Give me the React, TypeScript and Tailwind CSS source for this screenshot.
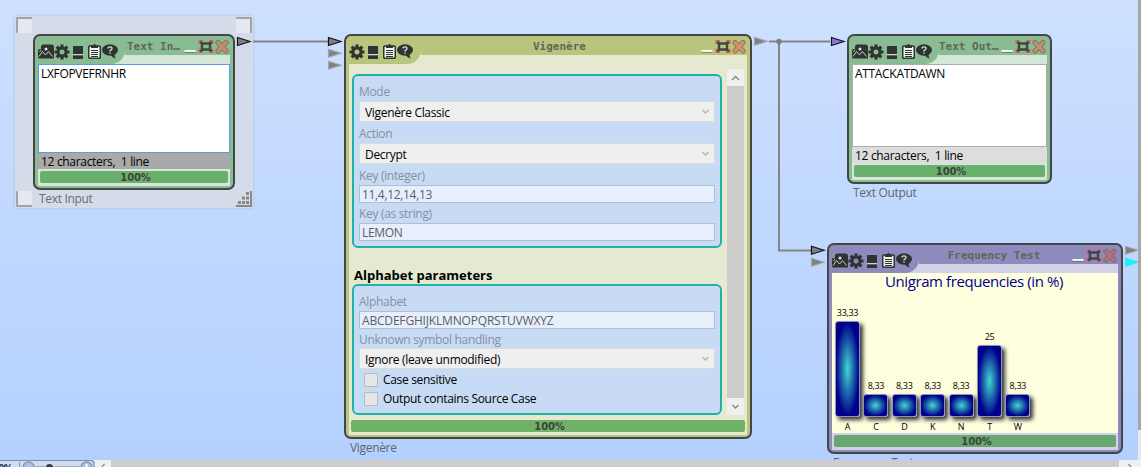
import type { ReactNode } from "react";

const PictureIcon = () => (
  <svg width="16" height="15" viewBox="0 0 16 15">
    <path d="M0 5.500 3 5V3Q3 .5 5 .5H13.500Q16 .5 16 3V14.500H1.500Q0 14.500 0 13Z" fill="#303331" />
    <path d="M1 12.500 4.500 7.500 7.500 11 10.500 7.500 14.500 12.500M1.500 8 3 6" fill="none" stroke="#b9d2bf" strokeWidth="1" />
    <circle cx="8" cy="5" r="1.500" fill="#dce8df" />
  </svg>
);

const GearIcon = () => (
  <svg width="16" height="16" viewBox="0 0 16 16">
    <g stroke="#303331" strokeWidth="3.2">
      <path d="M8 .5V4M8 12v3.500M.5 8H4M12 8h3.500M2.700 2.700 5 5M11 11l2.300 2.300M2.700 13.300 5 11M11 5l2.300-2.300" />
    </g>
    <circle cx="8" cy="8" r="4" fill="none" stroke="#303331" strokeWidth="3" />
  </svg>
);

const PanelIcon = () => (
  <svg width="10" height="13" viewBox="0 0 10 13">
    <rect width="10" height="13" fill="#303331" />
    <rect y="8" width="10" height="1.300" fill="#c9dccd" />
  </svg>
);

const ClipboardIcon = () => (
  <svg width="13" height="15" viewBox="0 0 13 15">
    <rect x=".7" y="2" width="11.600" height="12.300" rx="1.500" fill="#f0f4f0" stroke="#303331" strokeWidth="1.600" />
    <path d="M3 4V1.500h2a1.500 1.500 0 0 1 3 0h2V4Z" fill="#303331" />
    <path d="M3 6.500h7M3 8.500h7M3 10.500h7M3 12.500h7" stroke="#303331" strokeWidth="1" />
  </svg>
);

const HelpIcon = () => (
  <svg width="16" height="15" viewBox="0 0 16 15">
    <ellipse cx="8" cy="6" rx="8" ry="5.700" fill="#303331" />
    <path d="M8 9h5q-1 3.500 1 5.500-4-.5-6-5Z" fill="#303331" />
    <path d="M6 4.500Q6 2.800 8 2.800t2 1.700Q10 5.700 8 6.700v.8M8 8.500v1.300" fill="none" stroke="#d5e5d8" strokeWidth="1.300" />
  </svg>
);

const WindowButtons = ({ cross }: { cross: string }) => (
  <svg width="46" height="15" viewBox="0 0 46 15" className="shrink-0">
    <rect x=".5" y="11" width="11" height="2" fill="#fff" />
    <path d="M.5 13.300h11" stroke="#555" strokeWidth=".6" />
    <path d="M15 5V1.600h4M25 1.600h4V5M29 9.500v4h-4M19 13.500h-4v-4" fill="none" stroke="#f05b58" strokeWidth="1.200" />
    <path d="m16 2.800 3 2M28 2.800l-3 2M16 12.300l3-2M28 12.300l-3-2" stroke="#454545" strokeWidth="2.600" />
    <rect x="18" y="4.500" width="8" height="6" fill="none" stroke="#454545" strokeWidth="2.500" />
    <path d="m34 3.500 8 8.500M42 3.500 34 12" stroke="#6b6f5c" strokeWidth="5" strokeLinecap="round" />
    <path d="m34 3.500 8 8.500M42 3.500 34 12" stroke={cross} strokeWidth="3.600" strokeLinecap="round" />
  </svg>
);

type Tone = { main: string; light: string; cross: string; bar: string };

const GREEN: Tone = { main: "bg-[#8abc93]", light: "bg-[#d3e6d7]", cross: "#c38a72", bar: "bg-[#68b06b]" };
const OLIVE: Tone = { main: "bg-[#b8c67d]", light: "bg-[#e4e9cf]", cross: "#d59068", bar: "bg-[#70b168]" };
const PURPLE: Tone = { main: "bg-[#8d8abd]", light: "bg-[#d3d1e6]", cross: "#b86a85", bar: "bg-[#68a770]" };

type NodeProps = {
  place: string;
  tone: Tone;
  title: string;
  picture?: boolean;
  titleClass: string;
  children: ReactNode;
};

const ComponentNode = ({ place, tone, title, picture, titleClass, children }: NodeProps) => (
  <section className={`absolute flex flex-col rounded-[7px] border-2 border-[#434547] px-[3px] pb-[2px] pt-[3px] ${tone.main} ${place}`}>
    <div className={`flex min-h-0 flex-1 flex-col ${tone.light}`}>
      <header className="flex h-[25px] shrink-0 items-start">
        <div className={`flex h-[25px] shrink-0 items-start rounded-br-[14px] pt-[5px] ${picture ? "w-[87px]" : "w-[72px]"} ${tone.main}`}>
          {picture && <PictureIcon />}
          <GearIcon />
          <span className="ml-[3px] mt-[2px]"><PanelIcon /></span>
          <span className="ml-[5px]"><ClipboardIcon /></span>
          <span className="ml-px"><HelpIcon /></span>
        </div>
        <div className={`flex h-[16px] min-w-0 flex-1 ${tone.main}`}>
          <span className={`min-w-0 flex-1 whitespace-pre font-['DejaVu_Sans_Mono'] text-[11px] font-bold leading-[16px] text-[#5f6659] ${titleClass}`}>{title}</span>
          <WindowButtons cross={tone.cross} />
        </div>
      </header>
      {children}
      <div className="h-[17px] shrink-0 px-[2px] pt-[2px]">
        <div className={`h-[12px] rounded-[2px] pl-[3px] text-center font-['DejaVu_Sans'] text-[10px] font-bold leading-[13px] tracking-[-0.15px] text-[#3d443d] ${tone.bar}`}>100%</div>
      </div>
    </div>
  </section>
);

const Label = ({ children, className = "" }: { children: ReactNode; className?: string }) => (
  <div className={`flex shrink-0 items-center whitespace-pre pt-[2px] text-[#84909f] ${className}`}>{children}</div>
);

const Chevron = ({ up, color = "#b4b4b4" }: { up?: boolean; color?: string }) => (
  <svg width="9" height="6" viewBox="0 0 9 6">
    <path d={up ? "M1 5 4.500 1.500 8 5" : "M1.500 1 4.500 4 7.500 1"} fill="none" stroke={color} strokeWidth="1.400" />
  </svg>
);

const Combo = ({ children }: { children: ReactNode }) => (
  <div className="flex h-[21px] shrink-0 items-center justify-between border border-[#d9dadb] bg-[#efefef] pl-[5px] pr-[4px] text-black">
    <span className="pt-[3px]">{children}</span>
    <Chevron />
  </div>
);

const Field = ({ children }: { children: ReactNode }) => (
  <div className="flex h-[18px] shrink-0 items-center border border-[#b0bed4] bg-[#e8effc] pl-[2px] pt-[2px] text-[#5a6069]">{children}</div>
);

const Check = ({ children }: { children: ReactNode }) => (
  <div className="flex h-[19px] shrink-0 items-center gap-[5px] pl-[5px] text-black">
    <span className="size-[14px] border border-[#b9bbbd] bg-[#e6e6e6]" />
    <span>{children}</span>
  </div>
);

const BARS = [
  { letter: "A", value: "33,33", height: 96 },
  { letter: "C", value: "8,33", height: 23 },
  { letter: "D", value: "8,33", height: 23 },
  { letter: "K", value: "8,33", height: 23 },
  { letter: "N", value: "8,33", height: 23 },
  { letter: "T", value: "25", height: 72 },
  { letter: "W", value: "8,33", height: 23 },
];

const Arrow = ({ x, y, fill, stroke }: { x: number; y: number; fill: string; stroke: string }) => (
  <path d={`M${x + 0.5} ${y - 4}L${x + 13} ${y}L${x + 0.5} ${y + 4}Z`} fill={fill} stroke={stroke} strokeWidth="1.200" />
);

const Connectors = () => (
  <svg width="1141" height="467" className="absolute left-0 top-0">
    <g fill="none" stroke="#858585" strokeWidth="2">
      <path d="M253 41.500H328M769 41.500H830M779 41.500V250.500H811" />
    </g>
    <circle cx="779" cy="41.500" r="2.700" fill="#7c7c7c" />
    <Arrow x={237} y={41.5} fill="#808080" stroke="#111" />
    <Arrow x={328} y={41.5} fill="#808080" stroke="#111" />
    <Arrow x={328} y={53.3} fill="#808080" stroke="#a2a7ae" />
    <Arrow x={328} y={65.3} fill="#808080" stroke="#a2a7ae" />
    <Arrow x={754} y={41.3} fill="#808080" stroke="#a2a7ae" />
    <Arrow x={831} y={41.5} fill="#9370db" stroke="#111" />
    <Arrow x={811} y={250.3} fill="#808080" stroke="#111" />
    <Arrow x={811} y={262.3} fill="#808080" stroke="#a2a7ae" />
    <Arrow x={1125} y={250.3} fill="#808080" stroke="#a2a7ae" />
    <Arrow x={1125} y={262.3} fill="#00ffff" stroke="#40e4ee" />
  </svg>
);

const Selection = () => (
  <div className="absolute left-[15px] top-[16px] flex h-[192px] w-[238px] flex-col justify-between bg-[#d4dce9] p-px shadow-[0_0_3px_#aebfd8]">
    <div className="flex justify-between">
      <span className="size-[16px] border-l-2 border-t-2 border-[#a2a4a7] bg-[#e3e8f1]" />
      <span className="size-[16px] border-r-2 border-t-2 border-[#a2a4a7] bg-[#e3e8f1]" />
    </div>
    <div className="flex justify-between">
      <span className="size-[16px] border-b-2 border-l-2 border-[#a2a4a7] bg-[#e3e8f1]" />
      <svg width="16" height="16" viewBox="0 0 16 16">
        <path d="M15 0V15H0" fill="none" stroke="#858789" strokeWidth="2" />
        <g fill="#858789">
          <rect x="10" y="1" width="3" height="3" />
          <rect x="6" y="5.500" width="3" height="3" /><rect x="10" y="5.500" width="3" height="3" />
          <rect x="2" y="10" width="3" height="3" /><rect x="6" y="10" width="3" height="3" /><rect x="10" y="10" width="3" height="3" />
        </g>
      </svg>
    </div>
  </div>
);

export default function App() {
  return (
    <main className="relative h-[467px] w-[1141px] overflow-hidden bg-linear-to-b from-[#cde0ff] to-[#b3d0fe] font-['Open_Sans','Noto_Sans',sans-serif] text-[12px] leading-[16px] tracking-[-0.32px]">
      <Selection />

      <ComponentNode place="left-[33px] top-[34px] h-[156px] w-[202px]" tone={GREEN} picture title="Text In…" titleClass="pl-[2px] tracking-[0px]">
        <div className="min-h-0 flex-1 border border-[#569de5] bg-white pl-[2px] pt-px text-black">LXFOPVEFRNHR</div>
        <div className="h-[16px] shrink-0 whitespace-pre bg-[#a9a9a9] pl-[3px] leading-[18px] text-black">12 characters,  1 line</div>
      </ComponentNode>
      <span className="absolute left-[39px] top-[191px] text-[#6a6d72]">Text Input</span>

      <ComponentNode place="left-[344px] top-[34px] h-[405px] w-[408px]" tone={OLIVE} title="Vigenère" titleClass="pr-[3px] text-center tracking-[0px]">
        <div className="flex min-h-0 flex-1 pl-[3px] pr-[3px]">
          <div className="flex w-[370px] flex-col pt-[10px]">
            <div className="flex h-[174px] shrink-0 flex-col rounded-[6px] border-2 border-[#20b2aa] bg-[#c8dbf5] px-[5px] pt-[5px]">
              <Label className="h-[20px]">Mode</Label>
              <Combo>Vigenère Classic</Combo>
              <Label className="h-[21px]">Action</Label>
              <Combo>Decrypt</Combo>
              <Label className="h-[21px]">Key (integer)</Label>
              <Field>11,4,12,14,13</Field>
              <Label className="h-[20px]">Key (as string)</Label>
              <Field>LEMON</Field>
            </div>
            <h2 className="h-[36px] shrink-0 pl-[2px] pt-[19px] text-[13px] font-bold tracking-[0px] text-black">Alphabet parameters</h2>
            <div className="flex h-[131px] shrink-0 flex-col rounded-[6px] border-2 border-[#20b2aa] bg-[#c8dbf5] px-[5px] pt-[5px]">
              <Label className="h-[20px]">Alphabet</Label>
              <Field><span className="tracking-[-0.18px]">ABCDEFGHIJKLMNOPQRSTUVWXYZ</span></Field>
              <Label className="h-[19px]">Unknown symbol handling</Label>
              <Combo>Ignore (leave unmodified)</Combo>
              <div className="mt-px">
                <Check>Case sensitive</Check>
                <Check>Output contains Source Case</Check>
              </div>
            </div>
          </div>
          <div className="ml-[5px] mt-[5px] flex h-[346px] w-[17px] flex-col bg-[#cdcdcd]">
            <div className="flex h-[17px] items-center justify-center bg-[#f0f0f0]"><Chevron up color="#858585" /></div>
            <div className="flex-1" />
            <div className="flex h-[17px] items-center justify-center bg-[#f0f0f0]"><Chevron color="#858585" /></div>
          </div>
        </div>
      </ComponentNode>
      <span className="absolute left-[350px] top-[440px] text-[#5f6670]">Vigenère</span>

      <ComponentNode place="left-[847px] top-[34px] h-[150px] w-[205px]" tone={GREEN} picture title="Text Out…" titleClass="tracking-[0px]">
        <div className="min-h-0 flex-1 border border-[#abadb3] bg-white pl-[2px] pt-px text-black">ATTACKATDAWN</div>
        <div className="h-[16px] shrink-0 whitespace-pre bg-[#dddddd] pl-[3px] leading-[18px] text-black">12 characters,  1 line</div>
      </ComponentNode>
      <span className="absolute left-[853px] top-[185px] text-[#5f6670]">Text Output</span>

      <ComponentNode place="left-[827px] top-[243px] h-[211px] w-[296px]" tone={PURPLE} picture title="Frequency Test" titleClass="pr-[3px] text-center tracking-[0px]">
        <div className="flex min-h-0 flex-1 flex-col bg-[#ffffe0]">
          <h1 className="h-[20px] shrink-0 pr-[2px] text-center text-[15px] leading-[17px] tracking-[-0.4px] text-[#00008b]">Unigram frequencies (in %)</h1>
          <div className="flex min-h-0 flex-1 items-end gap-[3.4px] pl-[3px] text-[9px] leading-[12px] text-black">
            {BARS.map((bar) => (
              <div key={bar.letter} className="flex w-[25px] flex-col items-center">
                <span className="mb-[2px]">{bar.value}</span>
                <div
                  className="w-full rounded-[3px] border border-[#8f93b8] bg-[radial-gradient(closest-side,#40d8d0,#00008b)] shadow-[3px_3px_4px_#333]"
                  style={{ height: bar.height }}
                />
                <span className="pt-[4px]">{bar.letter}</span>
              </div>
            ))}
          </div>
        </div>
      </ComponentNode>
      <span className="absolute left-[833px] top-[455px] text-[#5f6670]">Frequency Test</span>

      <Connectors />

      <div className="absolute right-0 top-0 h-[460px] w-[3px] bg-[#e9eaec]">
        <div className="h-[430px] bg-[#a6a6a6]" />
      </div>
      <div className="absolute bottom-0 left-0 flex h-[7px] w-full bg-[#f0f0f0]">
        <svg width="95" height="7" viewBox="0 0 95 7" className="shrink-0">
          <rect width="95" height="7" rx="2" fill="#cfdcf0" />
          <path d="M0 .5H92l2 2V7" fill="none" stroke="#7b8fb5" strokeWidth="1.200" />
          <path d="M34 6.500H80" stroke="#a5acb9" />
          <path d="M19.500 2V7" stroke="#8c9cb8" />
          <circle cx="28.500" cy="7.500" r="5.500" fill="#a9c3ee" stroke="#8b95a8" strokeWidth="1.400" />
          <circle cx="86.500" cy="7.500" r="5.500" fill="#a9c3ee" stroke="#8b95a8" strokeWidth="1.400" />
          <path d="M86.500 4v3" stroke="#fff" strokeWidth="2" />
          <circle cx="49.500" cy="8" r="4.500" fill="#333b3b" stroke="#f1f3f6" />
          <text x="-7" y="11.500" fontSize="10" fontWeight="bold" fill="#20335c">00%</text>
        </svg>
        <div className="w-[16px] pl-[5px]">
          <svg width="6" height="7" viewBox="0 0 6 7"><path d="M4.500 4 2 7" stroke="#888" strokeWidth="1.300" /></svg>
        </div>
        <div className="w-[1008px] bg-[#cdcdcd]" />
        <div className="flex-1 pl-[8px]">
          <svg width="6" height="7" viewBox="0 0 6 7"><path d="M1.500 4 4 7" stroke="#888" strokeWidth="1.300" /></svg>
        </div>
      </div>
    </main>
  );
}
